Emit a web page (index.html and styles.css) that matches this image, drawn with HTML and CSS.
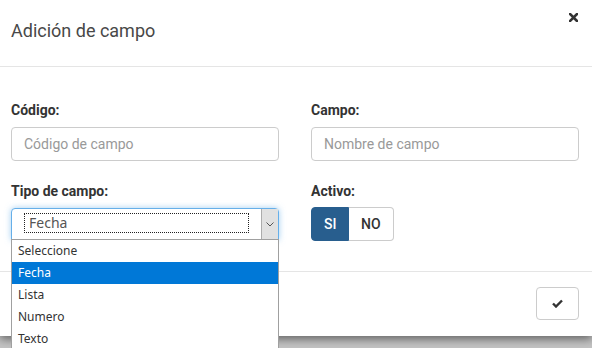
FILE: index.html
```html
<!DOCTYPE html>
<html lang="es">
<head>
    <meta charset="UTF-8">
    <meta name="viewport" content="width=device-width, initial-scale=1.0">
    <title>Adición de campo</title>
    <link rel="stylesheet" href="styles.css">
</head>
<body>
    <div class="modal">
        <div class="modal-header">
            <h4 class="modal-title">Adición de campo</h4>
            <button class="close" type="button" aria-label="Cerrar">
                <svg width="9" height="9" viewBox="0 0 9 9"><path d="M1 1L8 8M8 1L1 8" stroke="#333" stroke-width="2.6" stroke-linecap="square"/></svg>
            </button>
        </div>
        <div class="modal-body">
            <div class="form-grid">
                <div class="form-group">
                    <label for="codigo">Código:</label>
                    <input type="text" id="codigo" class="form-control" placeholder="Código de campo">
                </div>
                <div class="form-group">
                    <label for="campo">Campo:</label>
                    <input type="text" id="campo" class="form-control" placeholder="Nombre de campo">
                </div>
                <div class="form-group">
                    <label>Tipo de campo:</label>
                    <div class="select-wrap">
                        <div class="fake-select">
                            <span class="select-value"><span class="focus-ring">Fecha</span></span>
                            <span class="select-arrow">
                                <svg width="8" height="5" viewBox="0 0 8 5"><path d="M0.5 0.5L4 4L7.5 0.5" fill="none" stroke="#555" stroke-width="1"/></svg>
                            </span>
                        </div>
                        <ul class="select-list">
                            <li>Seleccione</li>
                            <li class="selected">Fecha</li>
                            <li>Lista</li>
                            <li>Numero</li>
                            <li>Texto</li>
                        </ul>
                    </div>
                </div>
                <div class="form-group">
                    <label>Activo:</label>
                    <div class="btn-group">
                        <button type="button" class="btn btn-active">SI</button>
                        <button type="button" class="btn">NO</button>
                    </div>
                </div>
            </div>
        </div>
        <div class="modal-footer">
            <button type="button" class="btn btn-ok" aria-label="Guardar">
                <svg width="11" height="9" viewBox="0 0 11 9"><path d="M1 4.5L4 7.5L10 1.5" fill="none" stroke="#333" stroke-width="2.4"/></svg>
            </button>
        </div>
    </div>
</body>
</html>
```

FILE: styles.css
```css
body {
    margin: 0;
    height: 348px;
    overflow: hidden;
    font-family: Roboto, "Liberation Sans", sans-serif;
    font-size: 14px;
    color: #333;
    background-color: #c4c4c4;
}
.modal {
    background-color: #fff;
    box-shadow: 0 3px 9px rgba(0, 0, 0, 0.5);
}
.modal-header {
    display: flex;
    justify-content: space-between;
    align-items: flex-start;
    height: 67px;
    padding: 0 14px 0 11px;
    border-bottom: 1px solid #e5e5e5;
    box-sizing: border-box;
}
.modal-title {
    margin: 21px 0 0;
    font-size: 18px;
    font-weight: 400;
    line-height: 20px;
    color: #484848;
}
.close {
    margin-top: 13px;
    padding: 0;
    border: 0;
    background: none;
    line-height: 0;
}
.modal-body {
    padding: 33px 13px 30px 11px;
}
.form-grid {
    display: grid;
    grid-template-columns: 268px 268px;
    column-gap: 32px;
    row-gap: 20px;
}
label {
    display: block;
    font-weight: 700;
    line-height: 20px;
    margin-bottom: 7px;
}
.form-control {
    display: block;
    width: 100%;
    height: 34px;
    box-sizing: border-box;
    padding: 6px 12px;
    border: 1px solid #ccc;
    border-radius: 4px;
    font-family: Roboto, sans-serif;
    font-size: 14px;
    color: #555;
}
.form-control::placeholder {
    color: #999;
}
.select-wrap {
    position: relative;
}
.fake-select {
    display: flex;
    height: 32px;
    box-sizing: border-box;
    border: 1px solid #66afe9;
    border-radius: 4px 4px 0 0;
    box-shadow: 0 0 6px rgba(102, 175, 233, 0.6);
    background-color: #fff;
}
.select-value {
    flex: 1;
    padding: 4px 12px 4px 12px;
}
.focus-ring {
    display: block;
    height: 20px;
    box-sizing: border-box;
    padding-left: 4px;
    border: 1px dotted #222;
    font-family: "Noto Sans", sans-serif;
    font-size: 14px;
    line-height: 17px;
    color: #555;
}
.select-arrow {
    display: flex;
    align-items: center;
    justify-content: center;
    width: 16px;
    background-color: #e1e1e1;
    border-left: 1px solid #acacac;
}
.select-list {
    position: absolute;
    top: 31px;
    left: 0;
    right: 0;
    margin: 0;
    padding: 0;
    list-style: none;
    background-color: #fff;
    border: 1px solid #a0a0a0;
    font-family: "Noto Sans", sans-serif;
    font-size: 12px;
    color: #333;
}
.select-list li {
    height: 22px;
    line-height: 22px;
    padding-left: 6px;
}
.select-list .selected {
    background-color: #0078d7;
    color: #fff;
}
.btn-group {
    display: flex;
    margin-top: -1px;
}
.btn {
    height: 34px;
    padding: 6px 12px;
    box-sizing: border-box;
    border: 1px solid #ccc;
    background-color: #fff;
    font-family: Roboto, sans-serif;
    font-size: 14px;
    font-weight: 500;
    color: #333;
}
.btn-group .btn:first-child {
    border-radius: 4px 0 0 4px;
}
.btn-group .btn:last-child {
    border-radius: 0 4px 4px 0;
    border-left: 0;
}
.btn-active {
    width: 38px;
    background-color: #285e8e;
    border-color: #285e8e;
    color: #fff;
}
.modal-footer {
    display: flex;
    justify-content: flex-end;
    padding: 15px 13px 16px;
    border-top: 1px solid #e5e5e5;
}
.btn-ok {
    display: flex;
    align-items: center;
    justify-content: center;
    width: 43px;
    height: 33px;
    border-radius: 4px;
}
```
